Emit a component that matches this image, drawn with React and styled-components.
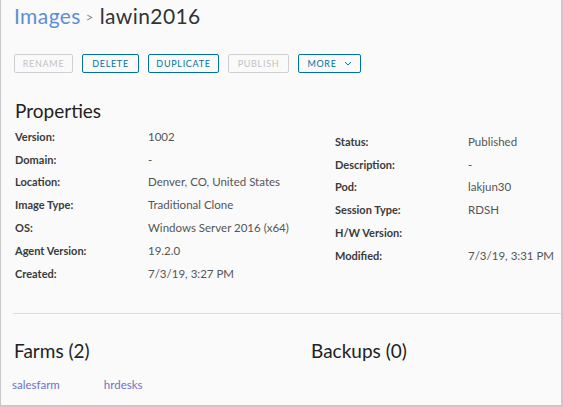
import styled, { createGlobalStyle } from "styled-components";

const GlobalStyle = createGlobalStyle`
  html, body {
    margin: 0;
    padding: 0;
    background: #ffffff;
  }
  body {
    font-family: Lato, "Open Sans", sans-serif;
    color: #333;
  }
`;

const Page = styled.div`
  box-sizing: border-box;
  width: 563px;
  height: 407px;
  background: #fafafa;
  border-left: 1px solid #c9c9c9;
  border-right: 2px solid #c9c9c9;
  border-bottom: 2px solid #c9c9c9;
  overflow: hidden;
`;

const Title = styled.h1`
  margin: 0;
  padding: 2px 0 0 13px;
  font-size: 21px;
  font-weight: 400;
  line-height: 28px;
  color: #333;
  letter-spacing: 0.4px;
`;

const Crumb = styled.span`
  color: #5b8ed6;
`;

const Sep = styled.span`
  font-size: 13px;
  color: #8c8c8c;
  margin: 0 6px 0 5px;
  vertical-align: 2px;
`;

const Toolbar = styled.div`
  display: flex;
  gap: 9px;
  padding: 23px 0 0 13px;
`;

const Button = styled.button`
  box-sizing: border-box;
  height: 19px;
  width: ${(p) => p.w}px;
  padding: 0;
  background: transparent;
  border: 1px solid ${(p) => (p.disabled ? "#d0d0d0" : "#0072a3")};
  border-radius: 2px;
  color: ${(p) => (p.disabled ? "#c2c2c2" : "#0072a3")};
  font-family: Lato, sans-serif;
  font-size: 9px;
  font-weight: 400;
  letter-spacing: 0.7px;
  text-transform: uppercase;
  display: flex;
  align-items: center;
  justify-content: center;
  gap: 7px;
`;

const SectionTitle = styled.h2`
  margin: 0;
  font-size: 19px;
  font-weight: 400;
  line-height: 24px;
  color: #222;
`;

const PropsSection = styled.section`
  padding: 26px 0 0 14px;
`;

const Columns = styled.div`
  display: grid;
  grid-template-columns: 320px 1fr;
  margin-top: 2px;
`;

const PropList = styled.dl`
  margin: ${(p) => p.offset || 0}px 0 0;
  display: grid;
  grid-template-columns: 133px 1fr;
  grid-auto-rows: 22.8px;
  align-items: center;
  font-size: 11px;
`;

const Label = styled.dt`
  font-weight: 700;
  color: #3a3a3a;
`;

const Value = styled.dd`
  margin: 0;
  color: #555;
  font-size: 11.5px;
`;

const Divider = styled.hr`
  margin: 28px 0 0 12px;
  border: 0;
  border-top: 1px solid #dcdcdc;
`;

const Bottom = styled.div`
  display: grid;
  grid-template-columns: 297px 1fr;
  padding: 25px 0 0 13px;
`;

const Links = styled.div`
  display: flex;
  gap: 44px;
  margin: 15px 0 0 -2px;
  font-size: 11.5px;
`;

const Link = styled.a`
  color: #6b72c8;
  text-decoration: none;
`;

const Chevron = () => (
  <svg width="8" height="5" viewBox="0 0 8 5" fill="none">
    <path d="M1 1l3 3 3-3" stroke="#0072a3" strokeWidth="1" />
  </svg>
);

const left = [
  ["Version:", "1002"],
  ["Domain:", "-"],
  ["Location:", "Denver, CO, United States"],
  ["Image Type:", "Traditional Clone"],
  ["OS:", "Windows Server 2016 (x64)"],
  ["Agent Version:", "19.2.0"],
  ["Created:", "7/3/19, 3:27 PM"],
];

const right = [
  ["Status:", "Published"],
  ["Description:", "-"],
  ["Pod:", "lakjun30"],
  ["Session Type:", "RDSH"],
  ["H/W Version:", ""],
  ["Modified:", "7/3/19, 3:31 PM"],
];

const Props = ({ rows, offset }) => (
  <PropList offset={offset}>
    {rows.map(([k, v]) => (
      <>
        <Label key={k}>{k}</Label>
        <Value key={k + "v"}>{v}</Value>
      </>
    ))}
  </PropList>
);

export default function App() {
  return (
    <>
      <GlobalStyle />
      <Page>
        <Title>
          <Crumb>Images</Crumb>
          <Sep>&gt;</Sep>
          lawin2016
        </Title>
        <Toolbar>
          <Button disabled w={59}>Rename</Button>
          <Button w={57}>Delete</Button>
          <Button w={71}>Duplicate</Button>
          <Button disabled w={61}>Publish</Button>
          <Button w={63}>
            More <Chevron />
          </Button>
        </Toolbar>
        <PropsSection>
          <SectionTitle>Properties</SectionTitle>
          <Columns>
            <Props rows={left} />
            <Props rows={right} offset={5} />
          </Columns>
        </PropsSection>
        <Divider />
        <Bottom>
          <div>
            <SectionTitle>Farms (2)</SectionTitle>
            <Links>
              <Link href="#">salesfarm</Link>
              <Link href="#">hrdesks</Link>
            </Links>
          </div>
          <SectionTitle>Backups (0)</SectionTitle>
        </Bottom>
      </Page>
    </>
  );
}
